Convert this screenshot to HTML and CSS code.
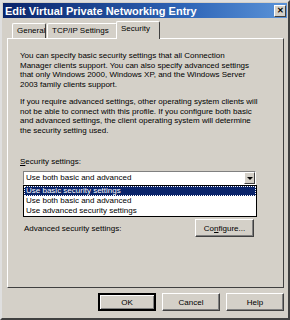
FILE: index.html
```html
<!DOCTYPE html>
<html lang="en">
<head>
  <meta charset="UTF-8">
  <title>Edit Virtual Private Networking Entry</title>
  <link rel="stylesheet" href="styles.css">
</head>
<body>
  <div class="window">
    <div class="titlebar">
      <span class="title">Edit Virtual Private Networking Entry</span>
      <span class="close">&#x2715;</span>
    </div>

    <div class="tabs">
      <div class="tab tab-general">General</div>
      <div class="tab tab-tcp">TCP/IP Settings</div>
      <div class="tab tab-active">Security</div>
    </div>

    <div class="panel">
      <p class="para">You can specify basic security settings that all Connection<br>
        Manager clients support. You can also specify advanced settings<br>
        that only Windows 2000, Windows XP, and the Windows Server<br>
        2003 family clients support.</p>
      <p class="para">If you require advanced settings, other operating system clients will<br>
        not be able to connect with this profile. If you configure both basic<br>
        and advanced settings, the client operating system will determine<br>
        the security setting used.</p>

      <div class="label"><u>S</u>ecurity settings:</div>
      <div class="combo-wrap">
        <div class="combo">
          <span class="combo-value">Use both basic and advanced</span>
          <span class="combo-btn"><span class="arrow"></span></span>
        </div>
        <ul class="droplist">
          <li class="item selected">Use basic security settings</li>
          <li class="item">Use both basic and advanced</li>
          <li class="item">Use advanced security settings</li>
        </ul>
      </div>

      <div class="adv-row">
        <span class="adv-label">Advanced security settings:</span>
        <button class="btn btn-config">Co<u>n</u>figure...</button>
      </div>
    </div>

    <div class="buttons">
      <button class="btn btn-ok">OK</button>
      <button class="btn">Cancel</button>
      <button class="btn">Help</button>
    </div>
  </div>
</body>
</html>
```

FILE: styles.css
```css
body {
  margin: 0;
  padding: 0;
  font-family: 'Liberation Sans', Arial, sans-serif;
  font-size: 8px;
  color: #000;
  background: #d4d0c8;
}
.window {
  width: 290px;
  height: 320px;
  box-sizing: border-box;
  background: #d4d0c8;
  border: 2px solid;
  border-color: #dfdfdf #404040 #404040 #dfdfdf;
  padding: 1px;
  display: flex;
  flex-direction: column;
}
.titlebar {
  height: 15px;
  background: linear-gradient(to right, #0a246a, #2f66b8 65%, #5b93d8);
  display: flex;
  align-items: center;
  justify-content: space-between;
  padding: 0 1px 0 2px;
}
.title {
  color: #fff;
  font-weight: bold;
  font-size: 11px;
}
.close {
  width: 12px;
  height: 12px;
  background: #d4d0c8;
  border: 1px solid;
  border-color: #fff #404040 #404040 #fff;
  box-sizing: border-box;
  font-size: 8px;
  line-height: 10px;
  text-align: center;
  font-weight: bold;
}
.tabs {
  display: flex;
  align-items: flex-end;
  height: 18px;
  margin: 2px 0 0 9px;
  position: relative;
  z-index: 1;
}
.tab {
  height: 15px;
  box-sizing: border-box;
  border: 1px solid;
  border-bottom: none;
  border-color: #fff #404040 #404040 #fff;
  border-radius: 2px 2px 0 0;
  padding: 0 4px;
  line-height: 14px;
  font-size: 8px;
}
.tab-general {
  width: 34px;
}
.tab-tcp {
  width: 70px;
  margin-left: 1px;
}
.tab-active {
  height: 18px;
  width: 44px;
  margin-left: -1px;
  background: #d4d0c8;
  line-height: 13px;
  margin-bottom: -1px;
}
.panel {
  margin: 0 3px 0 4px;
  height: 250px;
  box-sizing: border-box;
  border: 1px solid;
  border-color: #fff #404040 #404040 #fff;
  padding: 12px 10px 0 12px;
}
.para {
  margin: 0 0 8px;
  line-height: 9.5px;
  font-size: 8px;
  white-space: nowrap;
}
.label {
  margin-top: 22px;
  line-height: 10px;
}
.combo-wrap {
  position: relative;
  margin: 4px 17px 0 3px;
}
.combo {
  height: 14px;
  box-sizing: border-box;
  background: #fff;
  border: 1px solid;
  border-color: #808080 #fff #fff #808080;
  display: flex;
  align-items: center;
  justify-content: space-between;
  padding-left: 2px;
  line-height: 12px;
}
.combo-btn {
  width: 11px;
  height: 12px;
  box-sizing: border-box;
  background: #d4d0c8;
  border: 1px solid;
  border-color: #fff #404040 #404040 #fff;
  display: flex;
  align-items: center;
  justify-content: center;
}
.arrow {
  width: 0;
  height: 0;
  border-left: 3px solid transparent;
  border-right: 3px solid transparent;
  border-top: 3px solid #000;
}
.droplist {
  position: absolute;
  left: 0;
  right: -1px;
  top: 14px;
  margin: 0;
  padding: 0;
  list-style: none;
  background: #fff;
  border: 1px solid #000;
  z-index: 2;
}
.item {
  height: 10px;
  line-height: 10px;
  padding-left: 2px;
}
.item.selected {
  background: #0a246a;
  color: #fff;
  outline: 1px dotted #fff;
  outline-offset: -1px;
}
.adv-row {
  display: flex;
  align-items: center;
  justify-content: space-between;
  margin: 34px 19px 0 4px;
}
.btn {
  width: 58px;
  height: 18px;
  box-sizing: border-box;
  background: #d4d0c8;
  border: 1px solid;
  border-color: #fff #404040 #404040 #fff;
  box-shadow: inset -1px -1px 0 #808080;
  font-family: 'Liberation Sans', Arial, sans-serif;
  font-size: 8px;
  color: #000;
  padding: 0;
}
.btn-config {
  width: 59px;
}
.btn-ok {
  border: 2px solid #000;
  box-shadow: inset 1px 1px 0 #fff, inset -1px -1px 0 #808080;
}
.buttons {
  display: flex;
  justify-content: flex-end;
  gap: 6px;
  margin: 5px 3px 0 0;
}
```
